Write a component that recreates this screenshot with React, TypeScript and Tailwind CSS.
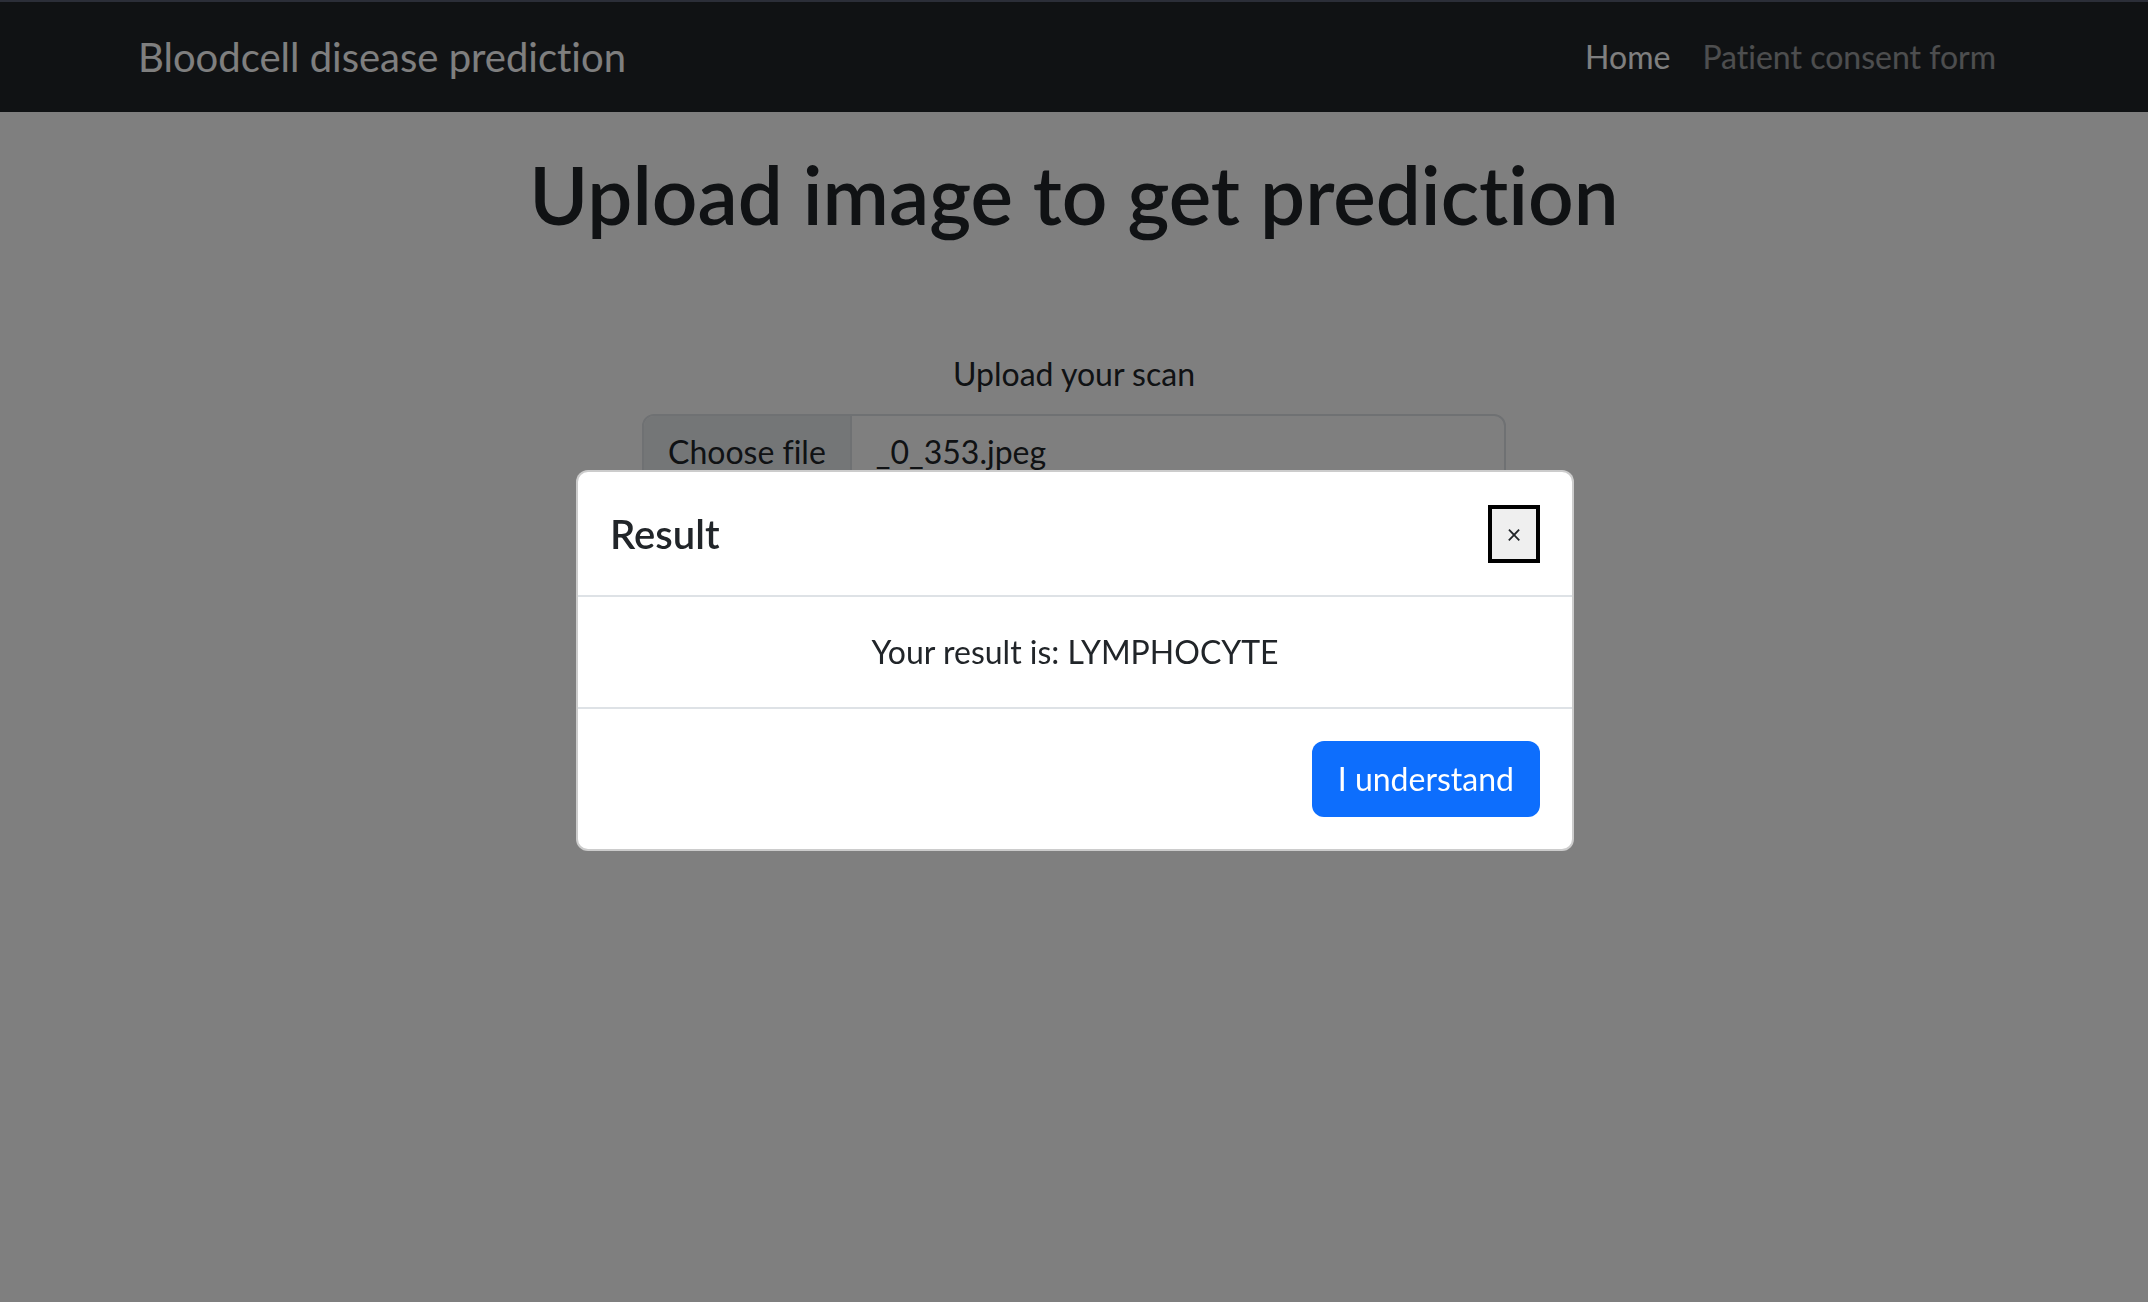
import React from 'react';

const App: React.FC = () => {
  const fileName = "_0_353.jpeg";
  const result = "LYMPHOCYTE";

  return (
    <div className="min-h-screen bg-white text-[#212529] font-['Lato',sans-serif] [font-variant-ligatures:none]">
      <nav className="h-[112px] bg-[#212529] border-t-2 border-[#575c70]">
        <div className="mx-auto w-[1920px] h-full px-[24px] flex items-center justify-between">
          <a href="#" className="text-[40px] text-white">Bloodcell disease prediction</a>
          <ul className="flex items-center">
            <li><a href="#" className="px-[16px] text-[32px] text-white">Home</a></li>
            <li><a href="#" className="pl-[16px] pr-[14px] text-[32px] text-white/55">Patient consent form</a></li>
          </ul>
        </div>
      </nav>

      <main className="mx-auto w-[1920px] px-[24px] text-center">
        <h1 className="mt-[34px] text-[80px] leading-[1.2] font-semibold">Upload image to get prediction</h1>
        <form className="mt-[108px] flex flex-col items-center">
          <label className="mb-[16px] text-[32px] leading-[48px]">Upload your scan</label>
          <div className="w-[864px] h-[76px] flex items-stretch border-2 border-[#dee2e6] rounded-[12px] overflow-hidden bg-white text-[32px]">
            <span className="flex items-center px-[24px] bg-[#e9ecef] border-r-2 border-[#dee2e6]">Choose file</span>
            <span className="flex items-center px-[24px]">{fileName}</span>
          </div>
        </form>
      </main>

      <div className="fixed inset-0 bg-black/50" />

      <div className="fixed inset-0 flex justify-center pt-[470px] pl-[2px]">
        <div className="w-[998px] h-fit bg-white rounded-[12px] border-2 border-black/20">
          <div className="flex items-center justify-between px-[32px] pt-[31px] pb-[30px] border-b-2 border-[#dee2e6]">
            <h5 className="text-[40px] leading-[62px] font-semibold">Result</h5>
            <button className="w-[52px] h-[58px] bg-[#efefef] border-[4px] border-black text-[26px] leading-none flex items-center justify-center">
              ×
            </button>
          </div>
          <div className="px-[32px] py-[31px] text-center text-[32px] leading-[48px] border-b-2 border-[#dee2e6]">
            Your result is: {result}
          </div>
          <div className="flex justify-end px-[24px] py-[24px]">
            <button className="m-[8px] h-[76px] px-[26px] rounded-[12px] bg-[#0d6efd] text-white text-[32px]">
              I understand
            </button>
          </div>
        </div>
      </div>
    </div>
  );
};

export default App;
